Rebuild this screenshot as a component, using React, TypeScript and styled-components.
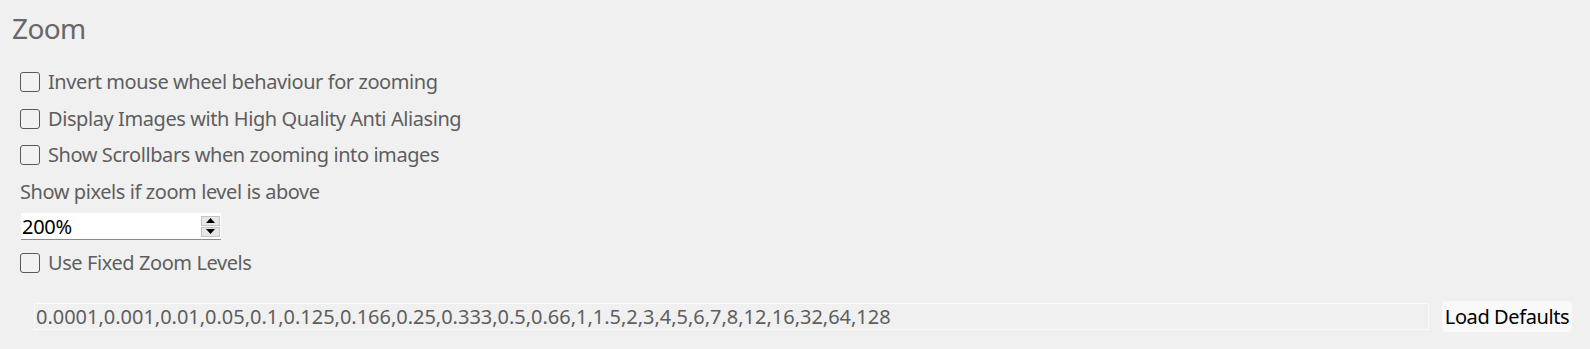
import React from "react";
import styled, { createGlobalStyle } from "styled-components";

const Global = createGlobalStyle`
  html, body { margin: 0; padding: 0; background: #f0f0f0; }
  body { font-family: "Noto Sans", "Open Sans", sans-serif; }
`;

const Page = styled.div`
  width: 1590px;
  height: 349px;
  box-sizing: border-box;
  padding: 11px 18px 0 12px;
  background: #f0f0f0;
  overflow: hidden;
`;

const Title = styled.h1`
  margin: 0;
  font-size: 28px;
  line-height: 34px;
  font-weight: 400;
  letter-spacing: -0.6px;
  color: #676767;
`;

const Body = styled.div`
  display: flex;
  flex-direction: column;
  padding-left: 8px;
  margin-top: 19px;
`;

const Row = styled.label<{ $h?: number; $mt?: number }>`
  display: flex;
  align-items: center;
  gap: 8px;
  height: ${(p) => p.$h ?? 36.5}px;
  margin-top: ${(p) => p.$mt ?? 0}px;
  font-size: 20px;
  letter-spacing: -0.42px;
  color: #5e5e5e;
`;

const Box = styled.span`
  width: 18px;
  height: 18px;
  border: 1px solid #5a5a5a;
  border-radius: 3px;
  background: #f2f2f2;
  flex: none;
`;

const Text = styled.span`
  line-height: 1;
  white-space: nowrap;
`;

const Spin = styled.div`
  display: flex;
  align-items: center;
  width: 200px;
  height: 27px;
  margin-top: 3px;
  margin-left: 1px;
  box-sizing: border-box;
  background: #ffffff;
  border-bottom: 1px solid #8a8a8a;
`;

const SpinValue = styled.span`
  flex: 1;
  padding-left: 1px;
  font-size: 20px;
  letter-spacing: -0.3px;
  color: #000;
`;

const SpinButtons = styled.div`
  display: flex;
  flex-direction: column;
  gap: 1px;
  margin-right: 1px;
`;

const SpinBtn = styled.div`
  width: 19px;
  height: 10px;
  box-sizing: border-box;
  border: 1px solid #c4c4c4;
  background: #e6e6e6;
  display: flex;
  align-items: center;
  justify-content: center;
`;

const FieldRow = styled.div`
  display: flex;
  align-items: center;
  gap: 13px;
  margin-top: 20px;
  padding-left: 14px;
`;

const Field = styled.div`
  flex: 1;
  height: 27px;
  box-sizing: border-box;
  border: 1px solid #f9f9f9;
  display: flex;
  align-items: center;
  padding-left: 1px;
  font-size: 20px;
  letter-spacing: -0.02px;
  color: #5e5e5e;
  white-space: nowrap;
`;

const Button = styled.button`
  width: 130px;
  height: 31px;
  border: none;
  border-radius: 4px;
  background: #f9f9f9;
  font-family: inherit;
  font-size: 20px;
  letter-spacing: -0.4px;
  color: #000;
  padding: 0;
`;

const Check: React.FC<{ label: string; mt?: number }> = ({ label, mt }) => (
  <Row $mt={mt} $h={mt ? 37 : 36.5}>
    <Box />
    <Text>{label}</Text>
  </Row>
);

export default function App() {
  return (
    <>
      <Global />
      <Page>
        <Title>Zoom</Title>
        <Body>
          <Check label="Invert mouse wheel behaviour for zooming" />
          <Check label="Display Images with High Quality Anti Aliasing" />
          <Check label="Show Scrollbars when zooming into images" />
          <Row as="div">
            <Text>Show pixels if zoom level is above</Text>
          </Row>
          <Spin>
            <SpinValue>200%</SpinValue>
            <SpinButtons>
              <SpinBtn>
                <svg width="9" height="5" viewBox="0 0 9 5">
                  <path d="M0 5 L4.5 0 L9 5 Z" fill="#000" />
                </svg>
              </SpinBtn>
              <SpinBtn>
                <svg width="9" height="5" viewBox="0 0 9 5">
                  <path d="M0 0 L9 0 L4.5 5 Z" fill="#000" />
                </svg>
              </SpinBtn>
            </SpinButtons>
          </Spin>
          <Check label="Use Fixed Zoom Levels" mt={4} />
          <FieldRow>
            <Field>
              0.0001,0.001,0.01,0.05,0.1,0.125,0.166,0.25,0.333,0.5,0.66,1,1.5,2,3,4,5,6,7,8,12,16,32,64,128
            </Field>
            <Button>Load Defaults</Button>
          </FieldRow>
        </Body>
      </Page>
    </>
  );
}
